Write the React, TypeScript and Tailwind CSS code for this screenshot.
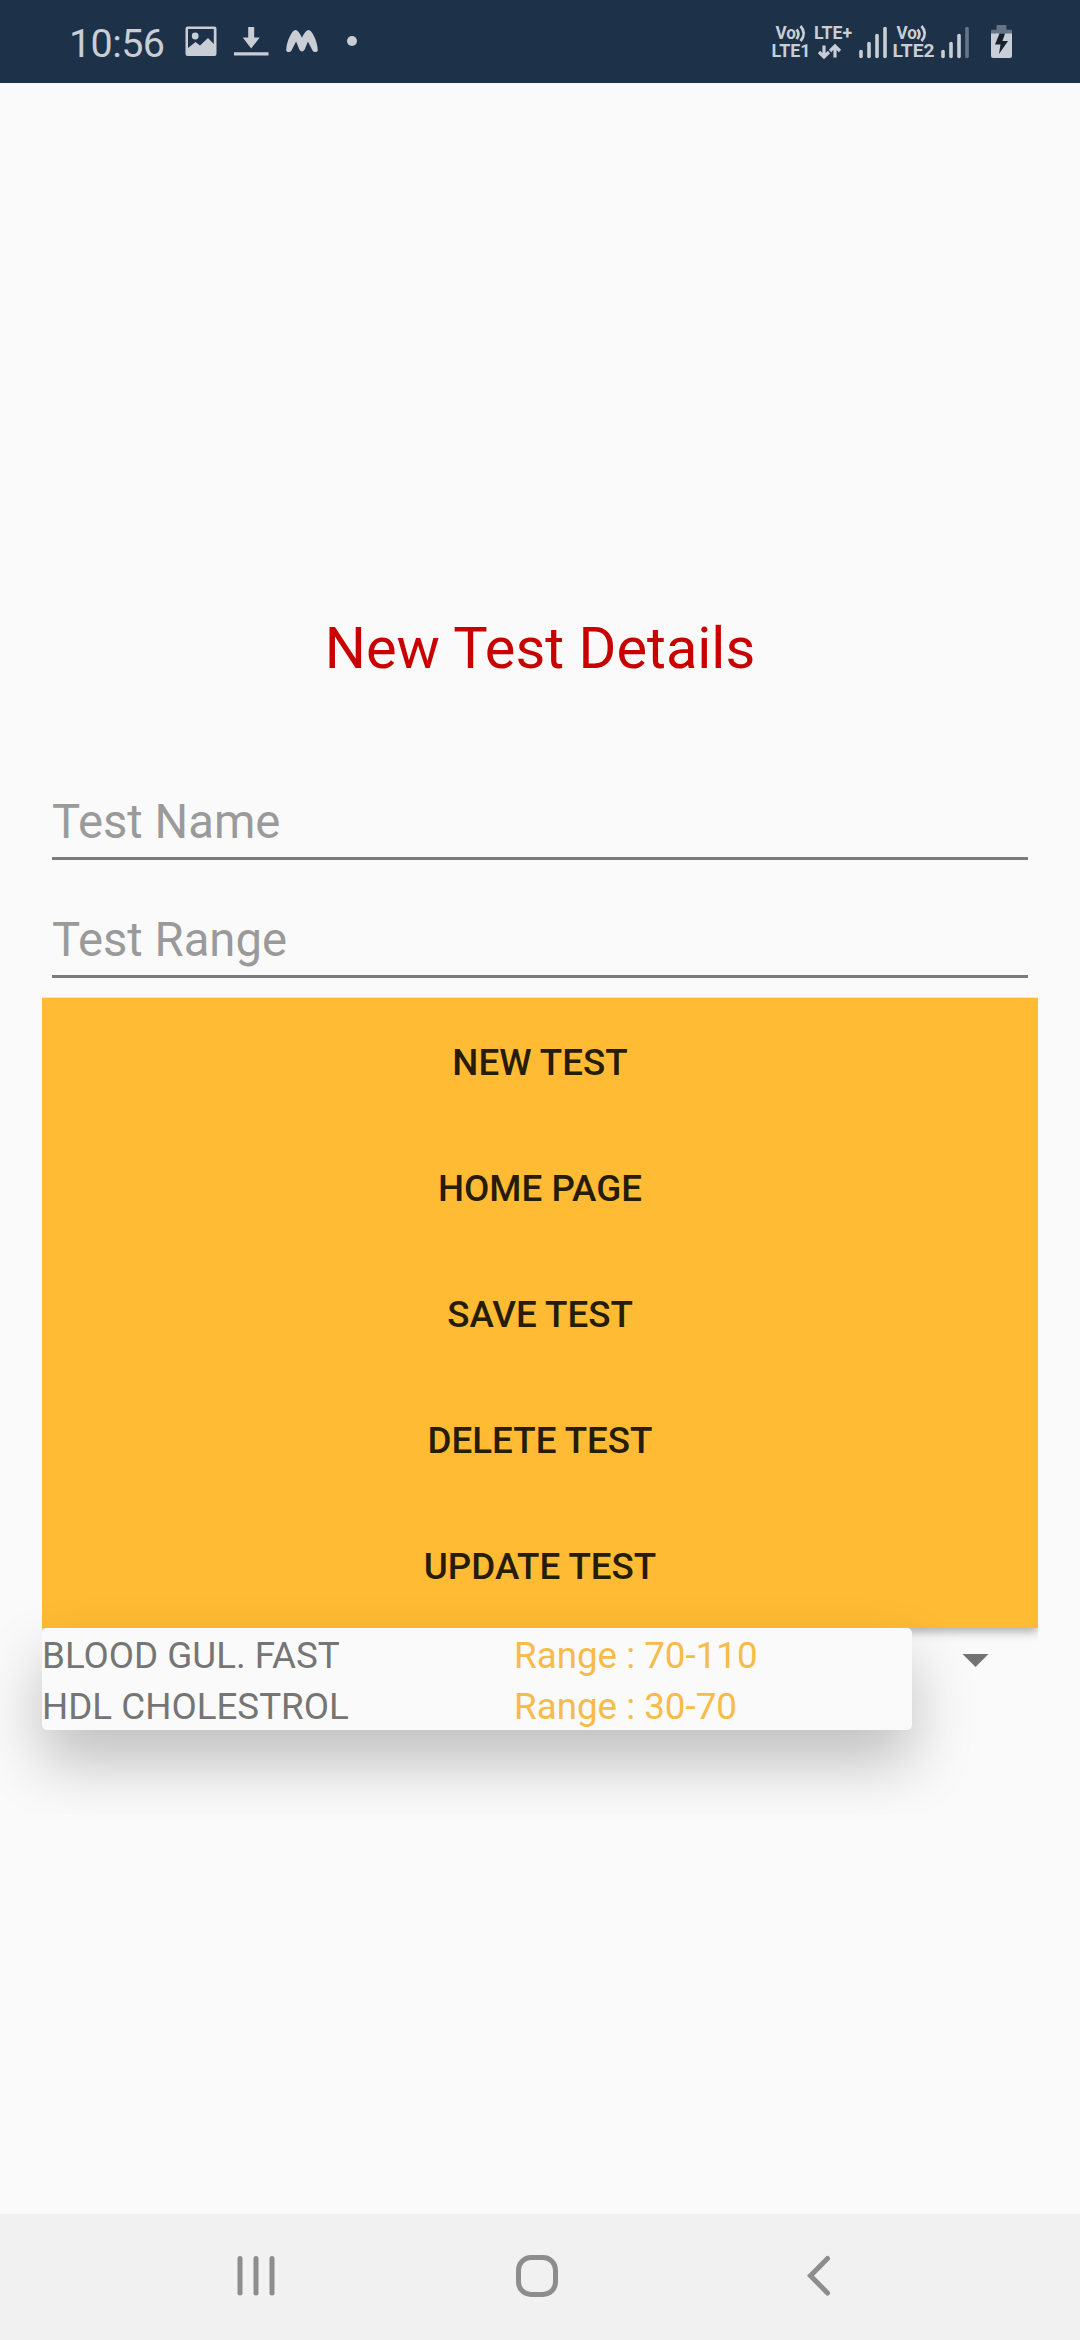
import React from "react";

const actions = ["New Test", "Home Page", "Save Test", "Delete Test", "Update Test"];

const tests = [
  { name: "BLOOD GUL. FAST", range: "Range : 70-110" },
  { name: "HDL CHOLESTROL", range: "Range : 30-70" },
];

function ImageIcon() {
  return (
    <svg className="ml-[20px] h-[31px] w-[32px]" viewBox="0 0 32 31">
      <path
        fill="#c8cdd6"
        fillRule="evenodd"
        d="M2.5 0.5h27a2 2 0 0 1 2 2v25.500a2 2 0 0 1-2 2h-27a2 2 0 0 1-2-2v-25.500a2 2 0 0 1 2-2zM3 3v19l7.500-6 4.500 3.500 8-7.500 5.800 6v-15z"
      />
      <circle cx="10.200" cy="10" r="3.400" fill="#c8cdd6" />
    </svg>
  );
}

function DownloadIcon() {
  return (
    <svg className="ml-[17px] h-[31px] w-[35px]" viewBox="0 0 35 31" fill="#c8cdd6">
      <path d="M14.200 1h6v10.500h5.500l-8.500 11-8.500-11h5.500zM0 26.200h34.500v3.300h-34.500z" />
    </svg>
  );
}

function WaveIcon() {
  return (
    <svg className="ml-[16px] h-[31px] w-[34px]" viewBox="0 0 34 31" fill="#c8cdd6">
      <path d="M10.500 4c2.400 0 4.800 4 6.500 7.800 1.700-3.800 4.100-7.800 6.500-7.800 3.500 0 9 11 9.300 20.200 0 2.200-4 2.600-5.300.2l-4.600-8.800-3 7.400c-1.200 3.200-4.600 3.200-5.800 0l-3-7.400-4.600 8.800c-1.300 2.400-5.300 2-5.300-.2.300-9.200 5.800-20.200 9.300-20.200z" />
    </svg>
  );
}

function VolteIcon({ line }: { line: number }) {
  return (
    <svg className="h-[36px] w-[42px] overflow-visible" viewBox="0 0 42 36">
      <g fill="#c8cdd6" fontFamily="Roboto, sans-serif" fontWeight="700">
        <text x="3.500" y="15" fontSize="17.500" textLength="20.500" lengthAdjust="spacingAndGlyphs">Vo</text>
        <text x="-0.500" y="33" fontSize="18" textLength={line === 1 ? 39 : 42} lengthAdjust="spacingAndGlyphs">
          {"LTE" + line}
        </text>
      </g>
      <path
        d="M24.500 5.500q4 4.500 0 9.500M28.500 2q6.500 7.500 0 15"
        fill="none"
        stroke="#c8cdd6"
        strokeWidth="2.700"
      />
    </svg>
  );
}

function LtePlusIcon() {
  return (
    <svg className="h-[36px] w-[39px] overflow-visible" viewBox="0 0 39 36">
      <text
        x="0"
        y="15"
        fill="#c8cdd6"
        fontFamily="Roboto, sans-serif"
        fontWeight="700"
        fontSize="17.500"
        textLength="38"
        lengthAdjust="spacingAndGlyphs"
      >
        LTE+
      </text>
      <path
        d="M10 21.500v11M5 28l5 5 5-5M21 33.500v-11M16 27l5-5 5 5"
        fill="none"
        stroke="#c8cdd6"
        strokeWidth="3.200"
      />
    </svg>
  );
}

function SignalIcon({ bars }: { bars: number }) {
  const tops = [28, 20, 12, 5];
  return (
    <svg className="h-[36px] w-[30px]" viewBox="0 0 30 36">
      {tops.map((y, i) => (
        <path
          key={y}
          d={`M${2 + i * 8} ${y - 0.5}V32.500`}
          stroke={i < bars ? "#c8cdd6" : "#657487"}
          strokeWidth="3.600"
          strokeLinecap="round"
        />
      ))}
    </svg>
  );
}

function BatteryIcon() {
  return (
    <svg className="h-[36px] w-[21px]" viewBox="0 0 21 36">
      <path d="M7 1h7.500a1 1 0 0 1 1 1v3.800h4.500a1 1 0 0 1 1 1v3.200h-21v-3.200a1 1 0 0 1 1-1h4.500v-3.800a1 1 0 0 1 1-1z" fill="#657487" />
      <path d="M0 9.500h21v22.500a2 2 0 0 1-2 2h-17a2 2 0 0 1-2-2z" fill="#c8cdd6" />
      <path d="M8.500 9.500h5.500l-2.500 7.500h5.500l-9 13 1.500-9.500h-5.500z" fill="#18222f" />
    </svg>
  );
}

function StatusBar() {
  return (
    <header className="flex h-[83px] items-start bg-[#1d3148] text-[#c8cdd6]">
      <span className="mt-[21px] ml-[69px] w-[96px] text-[39.500px] leading-[46px] tracking-[-0.6px] whitespace-nowrap">10:56</span>
      <div className="mt-[26px] flex items-start">
        <ImageIcon />
        <DownloadIcon />
        <WaveIcon />
        <span className="mt-[10px] ml-[28px] size-[10px] rounded-full bg-[#c8cdd6]" />
      </div>
      <div className="mt-[24px] mr-[68px] ml-auto flex items-start">
        <VolteIcon line={1} />
        <LtePlusIcon />
        <span className="ml-[6px] flex"><SignalIcon bars={4} /></span>
        <span className="ml-[4px] flex"><VolteIcon line={2} /></span>
        <span className="ml-[6px] flex"><SignalIcon bars={3} /></span>
        <span className="ml-[20px] flex"><BatteryIcon /></span>
      </div>
    </header>
  );
}

function Field({ label }: { label: string }) {
  return (
    <input
      type="text"
      placeholder={label}
      aria-label={label}
      className="mx-[10px] block h-[68px] border-b-[3px] border-[#7b7b7b] bg-transparent pb-[5px] text-[47.250px] leading-[60px] text-[#222] outline-none placeholder:text-[#9a9a9a]"
    />
  );
}

function NavBar() {
  return (
    <nav className="flex h-[126px] items-center bg-[#f1f1f1] pb-[2px] pl-[236px]">
      <svg className="h-[42px] w-[40px]" viewBox="0 0 40 42" stroke="#8d8d8d" strokeWidth="5" strokeLinecap="round">
        <path d="M4 3.500V38M20 3.500V38M36 3.500V38" />
      </svg>
      <svg className="ml-[240px] h-[42px] w-[42px]" viewBox="0 0 42 42" fill="none" stroke="#8d8d8d" strokeWidth="5">
        <rect x="2.500" y="2.500" width="37" height="37" rx="12.500" />
      </svg>
      <svg className="ml-[248px] h-[42px] w-[26px]" viewBox="0 0 26 42" fill="none" stroke="#8d8d8d" strokeWidth="5" strokeLinecap="round">
        <path d="M21.500 3.500L4.500 20.800L21.500 38" />
      </svg>
    </nav>
  );
}

export default function App() {
  return (
    <div className="flex h-[2340px] w-[1080px] flex-col overflow-hidden bg-[#fafafa] font-[Roboto,sans-serif]">
      <StatusBar />
      <main className="flex flex-1 flex-col px-[42px] pt-[527px]">
        <h1 className="text-center text-[57.750px] leading-[76px] text-[#c80000]">New Test Details</h1>
        <div className="mt-[106px] flex flex-col gap-[50px]">
          <Field label="Test Name" />
          <Field label="Test Range" />
        </div>
        <div className="mt-[20px] flex flex-col bg-[#ffbb33] shadow-[0_3px_10px_rgba(0,0,0,0.35)] [clip-path:inset(-1px_0_-20px_0)]">
          {actions.map((action) => (
            <button key={action} type="button" className="h-[126px] pt-[4px] text-[36.750px] font-medium text-[#261c08] uppercase">
              {action}
            </button>
          ))}
        </div>
        <div className="flex items-start">
          <div className="relative w-[870px] rounded-[5px] bg-[#fafafa] shadow-[0_32px_62px_rgba(0,0,0,0.24)] [clip-path:inset(-60px_-80px_-84px_-42px)]">
            {tests.map((test) => (
              <div key={test.name} className="flex h-[51px] pt-[4px] text-[36.750px] leading-[47px] whitespace-nowrap">
                <span className="w-[472px] text-[#757575]">{test.name}</span>
                <span className="text-[#f8bb49]">{test.range}</span>
              </div>
            ))}
          </div>
          <svg className="relative mt-[26px] ml-[50px] h-[13px] w-[27px]" viewBox="0 0 27 13" fill="#737373">
            <path d="M0.500 0H26.500L13.500 13z" />
          </svg>
        </div>
      </main>
      <NavBar />
    </div>
  );
}
